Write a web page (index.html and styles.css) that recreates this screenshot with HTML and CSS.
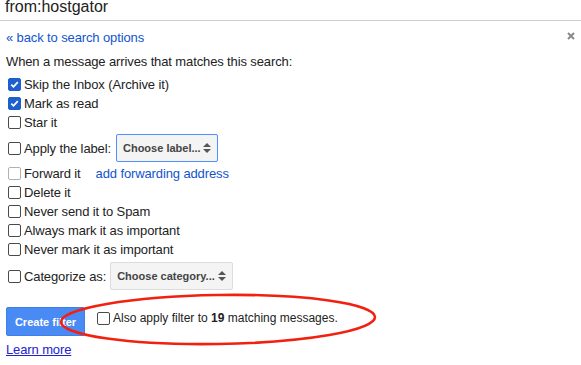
FILE: index.html
```html
<!DOCTYPE html>
<html>
<head>
<meta charset="utf-8">
<link rel="stylesheet" href="styles.css">
</head>
<body>
<div class="header"><div class="query">from:hostgator</div></div>
<div class="content">
  <div class="toprow">
    <a class="link">« back to search options</a>
    <span class="close">
      <svg width="8" height="8" viewBox="0 0 8 8"><path d="M1 1L7 7M7 1L1 7" stroke="#8a8a8a" stroke-width="2"/></svg>
    </span>
  </div>
  <div class="intro">When a message arrives that matches this search:</div>
  <div class="row"><span class="cb checked"><svg width="11" height="11" viewBox="0 0 11 11"><path d="M2.3 5.6L4.5 7.8L8.8 3.2" fill="none" stroke="#fff" stroke-width="1.8"/></svg></span>Skip the Inbox (Archive it)</div>
  <div class="row"><span class="cb checked"><svg width="11" height="11" viewBox="0 0 11 11"><path d="M2.3 5.6L4.5 7.8L8.8 3.2" fill="none" stroke="#fff" stroke-width="1.8"/></svg></span>Mark as read</div>
  <div class="row"><span class="cb"></span>Star it</div>
  <div class="row selrow apply"><span class="cb"></span>Apply the label:<span class="select focused label-select">Choose label...<span class="arrows"><svg width="8" height="12" viewBox="0 0 8 12"><path d="M0 5L4 1L8 5Z M0 7L4 11L8 7Z" fill="#555"/></svg></span></span></div>
  <div class="row"><span class="cb disabled"></span>Forward it<a class="link fwd">add forwarding address</a></div>
  <div class="row"><span class="cb"></span>Delete it</div>
  <div class="row"><span class="cb"></span>Never send it to Spam</div>
  <div class="row"><span class="cb"></span>Always mark it as important</div>
  <div class="row"><span class="cb"></span>Never mark it as important</div>
  <div class="row selrow categorize"><span class="cb"></span>Categorize as:<span class="select cat-select">Choose category...<span class="arrows"><svg width="8" height="12" viewBox="0 0 8 12"><path d="M0 5L4 1L8 5Z M0 7L4 11L8 7Z" fill="#555"/></svg></span></span></div>
  <div class="actions">
    <button class="create">Create filter</button>
    <label class="also"><span class="cb"></span>Also apply filter to&nbsp;<b>19</b>&nbsp;matching messages.</label>
  </div>
  <a class="learn">Learn more</a>
</div>
<svg class="annot" width="581" height="365" viewBox="0 0 581 365">
  <ellipse cx="218" cy="319.5" rx="157" ry="24.5" transform="rotate(-0.9 218 319.5)" fill="none" stroke="#f2200f" stroke-width="2.6"/>
</svg>
</body>
</html>
```

FILE: styles.css
```css
html, body {
  margin: 0;
  padding: 0;
  background: #fff;
  overflow: hidden;
}
body {
  font-family: "Liberation Sans", Arial, sans-serif;
  font-size: 13px;
  color: #222;
  width: 581px;
  height: 365px;
  position: relative;
}
.header {
  height: 20px;
  border-bottom: 1px solid #cfcfcf;
  overflow: hidden;
}
.query {
  font-size: 16px;
  line-height: 16px;
  margin-top: -1px;
  padding-left: 5px;
  color: #222;
}
.content {
  padding: 0 6px;
  letter-spacing: -0.12px;
}
.toprow {
  display: flex;
  justify-content: space-between;
  align-items: center;
  margin-top: 7px;
  line-height: 19px;
  height: 19px;
}
.link {
  color: #15c;
  text-decoration: none;
}
.close {
  display: flex;
  margin-top: -4px;
}
.intro {
  line-height: 19px;
  margin-top: 5px;
  margin-bottom: 4px;
}
.row {
  display: flex;
  align-items: center;
  height: 19px;
  line-height: 19px;
  white-space: nowrap;
}
.cb {
  box-sizing: border-box;
  width: 13px;
  height: 13px;
  border: 1px solid #4a4a4a;
  border-radius: 2px;
  background: #fff;
  margin: 0 3px 0 2px;
  flex: none;
  display: flex;
  align-items: center;
  justify-content: center;
}
.cb.checked {
  background: #1d5fcc;
  border-color: #1d5fcc;
}
.cb.disabled {
  border-color: #b0b0b0;
}
.selrow {
  height: 30px;
}
.apply {
  margin-top: 1px;
  margin-bottom: 1px;
}
.categorize {
  margin-top: 2px;
}
.select {
  box-sizing: border-box;
  display: flex;
  align-items: center;
  justify-content: space-between;
  height: 28px;
  background: #f4f4f4;
  border: 1px solid #dcdcdc;
  border-radius: 2px;
  font-size: 11px;
  font-weight: bold;
  letter-spacing: 0;
  color: #444;
  padding: 0 6px 0 6px;
}
.select.focused {
  border-color: #4d90fe;
}
.label-select {
  width: 102px;
  margin-left: 5px;
}
.cat-select {
  width: 123px;
  margin-left: 4px;
}
.arrows {
  display: flex;
}
.fwd {
  margin-left: 15px;
}
.actions {
  display: flex;
  align-items: flex-start;
  margin-top: 16px;
}
.create {
  box-sizing: border-box;
  width: 79px;
  height: 29px;
  background: #4a8af4;
  border: 1px solid #3f7fe8;
  border-radius: 2px;
  color: #fff;
  font-family: "Liberation Sans", Arial, sans-serif;
  font-size: 11px;
  font-weight: bold;
  letter-spacing: 0;
  padding: 0;
}
.also {
  display: flex;
  align-items: center;
  font-size: 12px;
  letter-spacing: 0;
  line-height: 19px;
  margin-top: 2px;
  margin-left: 10px;
  white-space: nowrap;
}
.also .cb {
  margin-left: 2px;
}
.learn {
  display: block;
  width: max-content;
  margin-top: 4px;
  line-height: 19px;
  color: #2222cc;
  text-decoration: underline;
}
.annot {
  position: absolute;
  left: 0;
  top: 0;
  pointer-events: none;
}
```
